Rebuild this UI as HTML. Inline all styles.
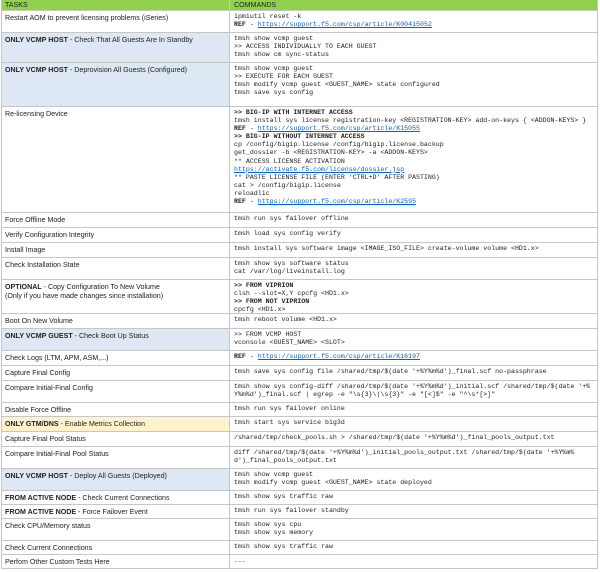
<!DOCTYPE html>
<html><head><meta charset="utf-8"><style>
*{box-sizing:border-box;margin:0;padding:0}
body{width:600px;height:572px;background:#fff;overflow:hidden;font-family:"Liberation Sans",sans-serif;color:#222}
.t{position:absolute;left:1px;top:0;width:597px;border-left:1px solid #c6c6c6;border-right:1px solid #c6c6c6}
.r{display:flex;border-bottom:1px solid #c6c6c6}
.a{width:228px;border-right:1px solid #c6c6c6;padding:3px 3px 0 3px;font-size:7.1px;line-height:9px;white-space:nowrap;overflow:hidden}
.b{flex:1;padding:2px 3px 0 4px;font-family:"Liberation Mono",monospace;font-size:6.6px;line-height:8.1px;white-space:pre;overflow:hidden}
.h{background:#92d050}
.h .a,.h .b{font-family:"Liberation Sans",sans-serif;font-size:7.1px;padding-top:1px;border-right-color:#b6e08c}
.bl .a{background:#dde8f4}
.yl .a{background:#fff2cc}
a{color:#0563c1;text-decoration:underline}
b{font-weight:bold}
</style></head><body><div class="t">
<div class="r h" style="height:11px"><div class="a">TASKS</div><div class="b">COMMANDS</div></div>
<div class="r" style="height:22px"><div class="a">Restart AOM to prevent licensing problems (iSeries)</div><div class="b">ipmiutil reset -k
<b>REF</b> - <a>https://support.f5.com/csp/article/K00415052</a></div></div>
<div class="r bl" style="height:30px"><div class="a"><b>ONLY VCMP HOST</b> - Check That All Guests Are In Standby</div><div class="b">tmsh show vcmp guest
&gt;&gt; ACCESS INDIVIDUALLY TO EACH GUEST
tmsh show cm sync-status</div></div>
<div class="r bl" style="height:44px"><div class="a"><b>ONLY VCMP HOST</b> - Deprovision All Guests (Configured)</div><div class="b">tmsh show vcmp guest
&gt;&gt; EXECUTE FOR EACH GUEST
tmsh modify vcmp guest &lt;GUEST_NAME&gt; state configured
tmsh save sys config</div></div>
<div class="r" style="height:106px"><div class="a">Re-licensing Device</div><div class="b"><b>&gt;&gt; BIG-IP WITH INTERNET ACCESS</b>
tmsh install sys license registration-key &lt;REGISTRATION-KEY&gt; add-on-keys { &lt;ADDON-KEYS&gt; }
<b>REF</b> - <a>https://support.f5.com/csp/article/K15055</a>
<b>&gt;&gt; BIG-IP WITHOUT INTERNET ACCESS</b>
cp /config/bigip.license /config/bigip.license.backup
get_dossier -b &lt;REGISTRATION-KEY&gt; -a &lt;ADDON-KEYS&gt;
** ACCESS LICENSE ACTIVATION
<a>https://activate.f5.com/license/dossier.jsp</a>
** PASTE LICENSE FILE (ENTER 'CTRL+D' AFTER PASTING)
cat &gt; /config/bigip.license
reloadlic
<b>REF</b> - <a>https://support.f5.com/csp/article/K2595</a></div></div>
<div class="r" style="height:15px"><div class="a">Force Offline Mode</div><div class="b">tmsh run sys failover offline</div></div>
<div class="r" style="height:15px"><div class="a">Verify Configuration Integrity</div><div class="b">tmsh load sys config verify</div></div>
<div class="r" style="height:15px"><div class="a">Install Image</div><div class="b">tmsh install sys software image &lt;IMAGE_ISO_FILE&gt; create-volume volume &lt;HD1.x&gt;</div></div>
<div class="r" style="height:22px"><div class="a">Check Installation State</div><div class="b">tmsh show sys software status
cat /var/log/liveinstall.log</div></div>
<div class="r" style="height:34px"><div class="a"><b>OPTIONAL</b> - Copy Configuration To New Volume<br>(Only if you have made changes since installation)</div><div class="b"><b>&gt;&gt; FROM VIPRION</b>
clsh --slot=X,Y cpcfg &lt;HD1.x&gt;
<b>&gt;&gt; FROM NOT VIPRION</b>
cpcfg &lt;HD1.x&gt;</div></div>
<div class="r" style="height:15px"><div class="a">Boot On New Volume</div><div class="b">tmsh reboot volume &lt;HD1.x&gt;</div></div>
<div class="r bl" style="height:22px"><div class="a"><b>ONLY VCMP GUEST</b> - Check Boot Up Status</div><div class="b">&gt;&gt; FROM VCMP HOST
vconsole &lt;GUEST_NAME&gt; &lt;SLOT&gt;</div></div>
<div class="r" style="height:15px"><div class="a">Check Logs (LTM, APM, ASM,...)</div><div class="b"><b>REF</b> - <a>https://support.f5.com/csp/article/K16197</a></div></div>
<div class="r" style="height:15px"><div class="a">Capture Final Config</div><div class="b">tmsh save sys config file /shared/tmp/$(date '+%Y%m%d')_final.scf no-passphrase</div></div>
<div class="r" style="height:22px"><div class="a">Compare Initial-Final Config</div><div class="b">tmsh show sys config-diff /shared/tmp/$(date '+%Y%m%d')_initial.scf /shared/tmp/$(date '+%
Y%m%d')_final.scf | egrep -e "\s{3}\|\s{3}" -e "[&lt;]$" -e "^\s*[&gt;]"</div></div>
<div class="r" style="height:14px"><div class="a">Disable Force Offline</div><div class="b">tmsh run sys failover online</div></div>
<div class="r yl" style="height:15px"><div class="a"><b>ONLY GTM/DNS</b> - Enable Metrics Collection</div><div class="b">tmsh start sys service big3d</div></div>
<div class="r" style="height:15px"><div class="a">Capture Final Pool Status</div><div class="b">/shared/tmp/check_pools.sh &gt; /shared/tmp/$(date '+%Y%m%d')_final_pools_output.txt</div></div>
<div class="r" style="height:22px"><div class="a">Compare Initial-Final Pool Status</div><div class="b">diff /shared/tmp/$(date '+%Y%m%d')_initial_pools_output.txt /shared/tmp/$(date '+%Y%m%
d')_final_pools_output.txt</div></div>
<div class="r bl" style="height:22px"><div class="a"><b>ONLY VCMP HOST</b> - Deploy All Guests (Deployed)</div><div class="b">tmsh show vcmp guest
tmsh modify vcmp guest &lt;GUEST_NAME&gt; state deployed</div></div>
<div class="r" style="height:14px"><div class="a"><b>FROM ACTIVE NODE</b> - Check Current Connections</div><div class="b">tmsh show sys traffic raw</div></div>
<div class="r" style="height:14px"><div class="a"><b>FROM ACTIVE NODE</b> - Force Failover Event</div><div class="b">tmsh run sys failover standby</div></div>
<div class="r" style="height:22px"><div class="a">Check CPU/Memory status</div><div class="b">tmsh show sys cpu
tmsh show sys memory</div></div>
<div class="r" style="height:14px"><div class="a">Check Current Connections</div><div class="b">tmsh show sys traffic raw</div></div>
<div class="r" style="height:14px"><div class="a">Perfom Other Custom Tests Here</div><div class="b">...</div></div>
</div></body></html>
